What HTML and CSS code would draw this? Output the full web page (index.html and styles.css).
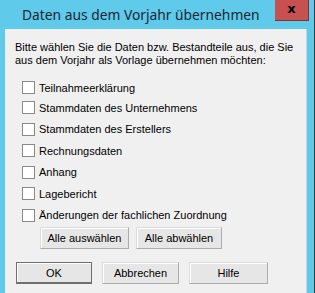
FILE: index.html
```html
<!DOCTYPE html>
<html lang="de">
<head>
  <meta charset="UTF-8">
  <title>Daten aus dem Vorjahr übernehmen</title>
  <link rel="stylesheet" href="styles.css">
</head>
<body>

  <div class="window">
    <div class="titlebar">
      <span class="title">Daten aus dem Vorjahr übernehmen</span>
      <span class="close">x</span>
    </div>

    <div class="client">
      <p class="intro">Bitte wählen Sie die Daten bzw. Bestandteile aus, die Sie aus dem Vorjahr als Vorlage übernehmen möchten:</p>

      <div class="options">
        <label class="option first"><span class="box"></span>Teilnahmeerklärung</label>
        <label class="option"><span class="box"></span>Stammdaten des Unternehmens</label>
        <label class="option"><span class="box"></span>Stammdaten des Erstellers</label>
        <label class="option"><span class="box"></span>Rechnungsdaten</label>
        <label class="option"><span class="box"></span>Anhang</label>
        <label class="option"><span class="box"></span>Lagebericht</label>
        <label class="option"><span class="box"></span>Änderungen der fachlichen Zuordnung</label>
      </div>

      <div class="select-row">
        <button class="btn btn-all">Alle auswählen</button>
        <button class="btn btn-none">Alle abwählen</button>
      </div>

      <div class="action-row">
        <button class="btn btn-default btn-ok">OK</button>
        <button class="btn btn-cancel">Abbrechen</button>
        <button class="btn btn-help">Hilfe</button>
      </div>
    </div>
  </div>

</body>
</html>
```

FILE: styles.css
```css
body {
  margin: 0;
  font-family: "Liberation Sans", Arial, sans-serif;
  font-size: 11px;
  color: #000;
}

.window {
  width: 314px;
  height: 293px;
  background-color: #5fcaea;
  border-right: 1px solid #2b3a40;
  display: flex;
  flex-direction: column;
  overflow: hidden;
}

.titlebar {
  height: 29px;
  display: flex;
  align-items: flex-start;
  flex-shrink: 0;
}

.title {
  font-family: "Noto Sans", sans-serif;
  font-size: 13.8px;
  color: #1b2733;
  padding-left: 22px;
  padding-top: 5px;
  white-space: nowrap;
}

.close {
  margin-left: auto;
  margin-right: 5px;
  width: 33px;
  height: 20px;
  flex-shrink: 0;
  background-color: #c75050;
  border-right: 1px solid #7a3434;
  border-bottom: 1px solid #7a3434;
  text-align: center;
  font-family: "DejaVu Sans", sans-serif;
  font-weight: bold;
  font-size: 13px;
  line-height: 18px;
  color: #000;
}

.client {
  flex: 1;
  margin: 0 7px 0 5px;
  background-color: #f0f0f0;
  border-right: 1px solid #c9d5d9;
  padding: 12px 0 0 10px;
}

.intro {
  margin: 0;
  line-height: 13px;
  width: 285px;
}

.options {
  margin-top: 11px;
  padding-left: 7px;
}

.option {
  display: flex;
  align-items: center;
  height: 21.5px;
}

.option.first {
  height: 19px;
}

.box {
  width: 11px;
  height: 11px;
  border: 1px solid #8a8a8a;
  background-color: #fff;
  margin-right: 4px;
  flex-shrink: 0;
}

.btn {
  font-family: "Liberation Sans", Arial, sans-serif;
  font-size: 11px;
  height: 22px;
  padding: 0;
  background-color: #e6e6e6;
  border: 1px solid #acacac;
  border-top-color: #dcdcdc;
  border-left-color: #dcdcdc;
  box-shadow: inset 1px 1px 0 #fff;
  color: #000;
}

.select-row {
  display: flex;
  gap: 7px;
  margin-top: 1px;
  padding-left: 25px;
}

.btn-all { width: 89px; }
.btn-none { width: 86px; }

.action-row {
  display: flex;
  gap: 10px;
  margin-top: 13px;
  padding-left: 1px;
}

.btn-ok { width: 76px; }
.btn-cancel { width: 77px; }
.btn-help { width: 79px; }

.btn-default {
  border: 1px solid #6f6f6f;
  border-bottom-width: 2px;
  box-shadow: inset 1px 1px 0 #fff;
}
```
